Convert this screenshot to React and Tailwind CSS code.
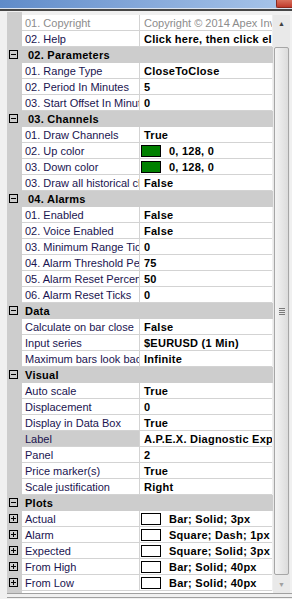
const rows = [
  { t: 'row', label: '01. Copyright', value: 'Copyright © 2014 Apex Investing', dim: true },
  { t: 'row', label: '02. Help', value: 'Click here, then click ellipsis' },
  { t: 'head', label: '02. Parameters', pad: true },
  { t: 'row', label: '01. Range Type', value: 'CloseToClose' },
  { t: 'row', label: '02. Period In Minutes', value: '5' },
  { t: 'row', label: '03. Start Offset In Minutes', value: '0' },
  { t: 'head', label: '03. Channels', pad: true },
  { t: 'row', label: '01. Draw Channels', value: 'True' },
  { t: 'row', label: '02. Up color', value: '0, 128, 0', swatch: '#008000' },
  { t: 'row', label: '03. Down color', value: '0, 128, 0', swatch: '#008000' },
  { t: 'row', label: '03. Draw all historical channels', value: 'False' },
  { t: 'head', label: '04. Alarms', pad: true },
  { t: 'row', label: '01. Enabled', value: 'False' },
  { t: 'row', label: '02. Voice Enabled', value: 'False' },
  { t: 'row', label: '03. Minimum Range Ticks', value: '0' },
  { t: 'row', label: '04. Alarm Threshold Percent', value: '75' },
  { t: 'row', label: '05. Alarm Reset Percent', value: '50' },
  { t: 'row', label: '06. Alarm Reset Ticks', value: '0' },
  { t: 'head', label: 'Data' },
  { t: 'row', label: 'Calculate on bar close', value: 'False' },
  { t: 'row', label: 'Input series', value: '$EURUSD (1 Min)' },
  { t: 'row', label: 'Maximum bars look back', value: 'Infinite' },
  { t: 'head', label: 'Visual' },
  { t: 'row', label: 'Auto scale', value: 'True' },
  { t: 'row', label: 'Displacement', value: '0' },
  { t: 'row', label: 'Display in Data Box', value: 'True' },
  { t: 'row', label: 'Label', value: 'A.P.E.X. Diagnostic Expected', selected: true },
  { t: 'row', label: 'Panel', value: '2' },
  { t: 'row', label: 'Price marker(s)', value: 'True' },
  { t: 'row', label: 'Scale justification', value: 'Right' },
  { t: 'head', label: 'Plots' },
  { t: 'row', label: 'Actual', value: 'Bar; Solid; 3px', swatch: '#ffffff', plus: true },
  { t: 'row', label: 'Alarm', value: 'Square; Dash; 1px', swatch: '#ffffff', plus: true },
  { t: 'row', label: 'Expected', value: 'Square; Solid; 3px', swatch: '#ffffff', plus: true },
  { t: 'row', label: 'From High', value: 'Bar; Solid; 40px', swatch: '#ffffff', plus: true },
  { t: 'row', label: 'From Low', value: 'Bar; Solid; 40px', swatch: '#ffffff', plus: true },
]

// tiny +/- expander box drawn in the gutter
function Expander({ open }) {
  return (
    <svg width="9" height="9" viewBox="0 0 9 9" className="mt-[3px] ml-[2px] shrink-0">
      <rect x="0.5" y="0.5" width="8" height="8" fill="none" stroke="#000" />
      <line x1="2" y1="4.5" x2="7" y2="4.5" stroke="#000" />
      {!open && <line x1="4.5" y1="2" x2="4.5" y2="7" stroke="#000" />}
    </svg>
  )
}

function Header({ label, pad }) {
  return (
    <div className="flex h-4 bg-[#cdcdcd]">
      <div className="w-[15px] shrink-0">
        <Expander open />
      </div>
      <div
        className={`whitespace-nowrap text-[11px] font-bold leading-[16px] tracking-[0.25px] text-black ${
          pad ? 'pl-[6px]' : 'pl-[3px]'
        }`}
      >
        {label}
      </div>
    </div>
  )
}

function Row({ r }) {
  return (
    <div className="flex h-4">
      <div className="w-[15px] shrink-0 bg-[#cdcdcd]">{r.plus && <Expander />}</div>
      <div
        className={`h-4 w-[118px] shrink-0 overflow-hidden whitespace-nowrap border-b border-r border-[#d3d3d3] pl-[3px] leading-[16px] ${
          r.selected ? 'bg-[#cdcdcd]' : 'bg-white'
        } ${r.dim ? 'text-[#8c8c8c]' : 'text-[#1a1450]'}`}
      >
        {r.label}
      </div>
      <div
        className={`flex h-4 w-[132px] shrink-0 overflow-hidden whitespace-nowrap border-b border-[#d3d3d3] bg-white leading-[16px] ${
          r.dim ? 'pl-[4px] text-[#8c8c8c]' : 'font-bold tracking-[0.25px] text-black'
        } ${!r.dim && !r.swatch ? 'pl-[4px]' : ''}`}
      >
        {r.swatch && (
          <div
            className="mt-[2px] ml-px mr-[8px] h-[12px] w-[20px] shrink-0 border border-black"
            style={{ background: r.swatch }}
          />
        )}
        {r.value}
      </div>
    </div>
  )
}

export default function App() {
  return (
    <div className="flex h-[599px] w-[292px] flex-col overflow-hidden bg-[#f0f0f0] font-['Liberation_Sans',Arial,sans-serif] text-[11px]">
      {/* window caption remnant */}
      <div className="flex h-[8px] justify-end bg-gradient-to-r from-[#5f8bc9] via-[#86a9da] to-[#a9c6ea]">
        <div className="h-[8px] w-[16px] rounded-bl-[2px] border-b border-l border-[#8a2a1e] bg-gradient-to-b from-[#d8705c] to-[#c0392b]" />
      </div>
      <div className="h-px bg-[#dbe4f0]" />
      <div className="h-[2px] bg-[#464646]" />
      <div className="h-px bg-[#f0f0f0]" />

      <div className="flex">
        <div className="w-[7px] shrink-0" />
        <div className="flex w-[266px] shrink-0 flex-col">
          <div className="flex h-[3px]">
            <div className="w-[15px] bg-[#cdcdcd]" />
          </div>
          {rows.map((r, i) => (r.t === 'head' ? <Header key={i} label={r.label} pad={r.pad} /> : <Row key={i} r={r} />))}
          <div className="flex h-[2px]">
            <div className="w-[15px] bg-[#cdcdcd]" />
            <div className="flex-1 bg-white" />
          </div>
        </div>

        {/* scrollbar */}
        <div className="mt-[3px] flex w-[17px] shrink-0 flex-col bg-[#e9e9e9]">
          <div className="flex h-[17px] items-center justify-center text-[7px] leading-none text-[#404040]">▲</div>
          <div className="h-[15px]" />
          <div className="mx-px flex h-[528px] items-center justify-center rounded-[2px] border border-[#a6a6a6] bg-gradient-to-r from-[#f4f4f4] to-[#dcdcdc]">
            <div className="flex flex-col gap-px">
              <div className="h-px w-[6px] bg-[#7a7a7a]" />
              <div className="h-px w-[6px] bg-[#7a7a7a]" />
              <div className="h-px w-[6px] bg-[#7a7a7a]" />
              <div className="h-px w-[6px] bg-[#7a7a7a]" />
            </div>
          </div>
          <div className="flex-1" />
          <div className="flex h-[17px] items-center justify-center text-[7px] leading-none text-[#a0a0a0]">▼</div>
        </div>
        <div className="w-[2px] shrink-0" />
      </div>

      <div className="ml-[7px] h-px bg-[#a0a0a0]" />
      <div className="h-[3px]" />
      <div className="ml-[7px] h-px bg-[#a0a0a0]" />
    </div>
  )
}
